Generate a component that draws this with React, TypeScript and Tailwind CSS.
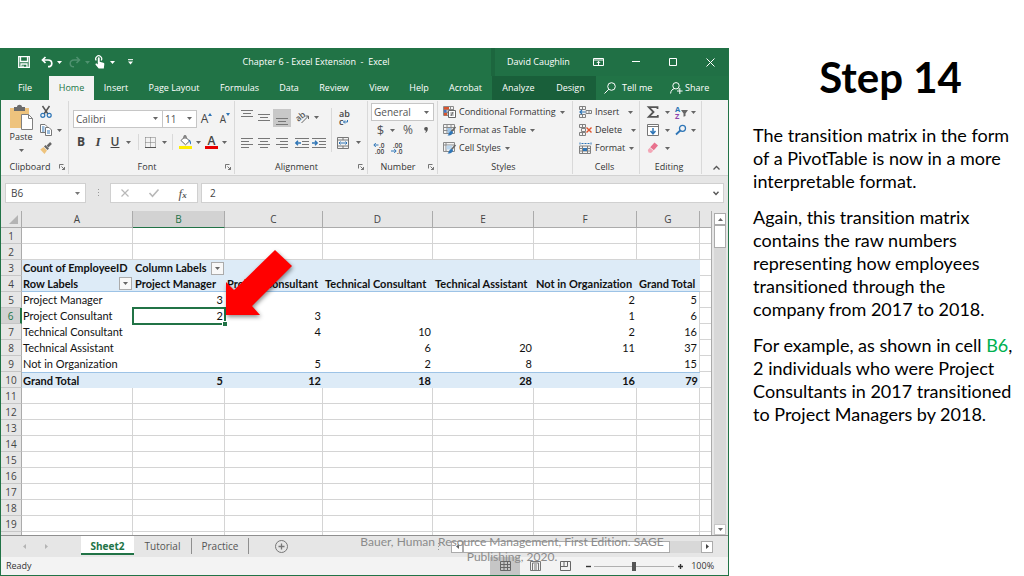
import React from "react";

const UI = "font-['Open_Sans','Noto_Sans',sans-serif]";
const SHEET = "font-[Lato,sans-serif] [font-variant-ligatures:none]";

function Caret({ className = "text-[#666]" }: { className?: string }) {
  return (
    <svg viewBox="0 0 5 3" className={`h-[3px] w-[5px] shrink-0 ${className}`} aria-hidden="true">
      <path d="M0 0h5L2.5 3z" fill="currentColor" />
    </svg>
  );
}

type IconProps = { w?: string; h?: string; box: string; children: React.ReactNode };
function Icon({ w = "w-4", h = "h-4", box, children }: IconProps) {
  return (
    <svg viewBox={box} className={`${w} ${h} shrink-0 overflow-visible`} fill="none" stroke="currentColor" aria-hidden="true">
      {children}
    </svg>
  );
}

function Tool({ label, className = "", children }: { label: string; className?: string; children: React.ReactNode }) {
  return (
    <button type="button" aria-label={label} className={`flex shrink-0 items-center justify-center ${className}`}>
      {children}
    </button>
  );
}

/* ---------- Title bar and tabs ---------- */

function TitleBar() {
  return (
    <header className="flex h-7 shrink-0 items-center bg-[#217346] text-[9px] text-white">
      <div className="flex w-[140px] shrink-0 items-center pl-[15px]">
        <Tool label="Save" className="w-4">
          <Icon w="w-3" h="h-3" box="0 0 12 12">
            <path d="M.7.7h10.6v10.6H.7zM2.5 1v4.5h7V1M3 11V8h6v3M5 11V9.5" strokeWidth="1.3" />
          </Icon>
        </Tool>
        <Tool label="Undo" className="ml-[7px] w-6 gap-1">
          <Icon w="w-3" h="h-3" box="0 0 12 12">
            <path d="M4.500 1 1.500 4l3 3M1.500 4H7c2.500 0 3.800 1.500 3.800 3.400S9.500 10.700 7 10.700" strokeWidth="1.700" />
          </Icon>
          <Caret className="text-white" />
        </Tool>
        <Tool label="Redo" className="ml-1 w-6 gap-1 text-[#4f9270]">
          <Icon w="w-3" h="h-3" box="0 0 12 12">
            <path d="m7.500 1 3 3-3 3M10.500 4H5C2.500 4 1.200 5.500 1.200 7.400S2.500 10.700 5 10.700" strokeWidth="1.500" />
          </Icon>
          <Caret className="text-[#4f9270]" />
        </Tool>
        <Tool label="Touch or mouse mode" className="ml-px w-6 gap-1">
          <Icon w="w-3" h="h-[14px]" box="0 0 12 14">
            <path d="M2.200 5.500a3 3 0 1 1 5 0" strokeWidth="1.200" />
            <path d="M3.800 3.200c0-1.200 1.900-1.200 1.900 0v3.600l3.600.9c.8.2 1.100.7 1 1.500l-.5 4.300H4.700L1.600 9.700c-.5-.9.400-1.700 1.200-1.100l1 .8z" fill="currentColor" stroke="none" />
          </Icon>
          <Caret className="text-white" />
        </Tool>
        <Tool label="Customize toolbar" className="ml-2 w-3">
          <Icon w="w-[5px]" h="h-[6px]" box="0 0 6 7">
            <path d="M0 .7h6" strokeWidth="1.200" />
            <path d="M0 3h6L3 6.500z" fill="currentColor" stroke="none" />
          </Icon>
        </Tool>
      </div>
      <h2 className="flex-1 whitespace-pre text-center font-normal">Chapter 6 - Excel Extension  -  Excel</h2>
      <div className="flex h-full w-[237px] shrink-0 items-center border-l-4 border-[#1c663e] bg-[#207045]">
        <span className="w-[97px] pl-3 whitespace-nowrap">David Caughlin</span>
        <Tool label="Ribbon display options" className="w-3">
          <Icon w="w-[11px]" h="h-2" box="0 0 11 8">
            <path d="M.5.5h10v7H.5zM.5 2h10M5.500 7V3.500M3.800 5 5.500 3.300 7.200 5" />
          </Icon>
        </Tool>
        <Tool label="Minimize" className="ml-[26px] w-3">
          <Icon w="w-2" h="h-2" box="0 0 8 8"><path d="M0 3.500h8" /></Icon>
        </Tool>
        <Tool label="Maximize" className="ml-[25px] w-3">
          <Icon w="w-2" h="h-2" box="0 0 8 8"><path d="M.5.5h7v7h-7z" /></Icon>
        </Tool>
        <Tool label="Close" className="ml-[25px] w-3">
          <Icon w="w-[9px]" h="h-[9px]" box="0 0 9 9"><path d="m.5.5 8 8m0-8-8 8" /></Icon>
        </Tool>
      </div>
    </header>
  );
}

const TABS: { name: string; cls: string }[] = [
  { name: "File", cls: "w-12" },
  { name: "Home", cls: "w-[45px] bg-[#f3f3f3] text-[#217346]" },
  { name: "Insert", cls: "w-11" },
  { name: "Page Layout", cls: "w-[72px]" },
  { name: "Formulas", cls: "w-[59px]" },
  { name: "Data", cls: "w-10" },
  { name: "Review", cls: "w-[50px]" },
  { name: "View", cls: "w-10" },
  { name: "Help", cls: "w-10" },
  { name: "Acrobat", cls: "w-[53px]" },
  { name: "Analyze", cls: "w-[53px] bg-[#195f3a]" },
  { name: "Design", cls: "w-[51px] bg-[#195f3a]" },
];

function RibbonTabs() {
  return (
    <nav className="flex h-6 shrink-0 bg-[#217346] text-[9px] text-white">
      {TABS.map((t) => (
        <button key={t.name} type="button" className={`shrink-0 whitespace-nowrap ${t.cls}`}>
          {t.name}
        </button>
      ))}
      <button type="button" className="flex w-[65px] shrink-0 items-center gap-[6px] pl-2 whitespace-nowrap">
        <Icon w="w-3" h="h-3" box="0 0 12 12">
          <circle cx="7.500" cy="4.500" r="3.800" />
          <path d="M4.800 7.200.5 11.500" />
        </Icon>
        Tell me
      </button>
      <button type="button" className="flex shrink-0 items-center gap-[2px] pl-[9px] whitespace-nowrap">
        <Icon w="w-[13px]" h="h-3" box="0 0 13 12">
          <circle cx="6" cy="3.800" r="3.200" />
          <path d="M.6 11.500C.8 8.500 2.500 7 4.500 6.600M7.500 6.600l1 .6M9.800 6v6M7 9h5.600" />
        </Icon>
        Share
      </button>
    </nav>
  );
}

/* ---------- Ribbon ---------- */

function Launcher({ name }: { name: string }) {
  return (
    <button type="button" aria-label={`${name} settings`} className="shrink-0 text-[#666]">
      <Icon w="w-[6px]" h="h-[6px]" box="0 0 6 6">
        <path d="M.5 4.500v-4h4M2.500 2.500l3 3M5.500 3v2.500H3" strokeWidth=".9" />
      </Icon>
    </button>
  );
}

function Group({ name, width, launcher, children }: { name: string; width: string; launcher?: boolean; children: React.ReactNode }) {
  return (
    <section aria-label={name} className={`flex shrink-0 flex-col ${width}`}>
      <div className="flex flex-1 border-r border-[#d9d9d9]">
        <div className="flex min-w-0 flex-1 flex-col">
          <div className="h-[59px] pt-[2px]">{children}</div>
          <div className="flex h-[14px] items-center pr-[3px] text-[#333]">
            <span className="flex-1 text-center">{name}</span>
            {launcher && <Launcher name={name} />}
          </div>
        </div>
      </div>
    </section>
  );
}

function Divider() {
  return <span className="h-4 w-px shrink-0 bg-[#d9d9d9]" />;
}

function Combo({ label, value, className }: { label: string; value: string; className: string }) {
  return (
    <div className={`flex h-[18px] items-center border border-[#c6c6c6] bg-white pr-1 text-[10px] leading-[14px] ${className}`}>
      <select aria-label={label} className="h-full min-w-0 flex-1 appearance-none bg-transparent pl-[2px] text-[#555] outline-none">
        <option>{value}</option>
      </select>
      <Caret />
    </div>
  );
}

function Lines({ d }: { d: string }) {
  return (
    <Icon w="w-3" h="h-3" box="0 0 12 12">
      <path d={d} stroke="#777" />
    </Icon>
  );
}

function Indent({ out }: { out?: boolean }) {
  return (
    <Icon w="w-[14px]" h="h-3" box="0 0 14 12">
      <path d="M0 1.500h14M7 4.500h7M7 7.500h7M0 10.500h14" stroke="#777" />
      <path d={out ? "M6 6H1M3 3.800.8 6 3 8.200" : "M0 6h5M3 3.800 5.200 6 3 8.200"} stroke="#2e75b6" strokeWidth="1.400" />
    </Icon>
  );
}

function MenuRow({ label, icon, gap = "ml-px" }: { label: string; icon: React.ReactNode; gap?: "ml-px" | "ml-[6px]" }) {
  return (
    <button type="button" className="flex h-[18px] items-center gap-[3px] whitespace-nowrap text-[#333]">
      {icon}
      {label}
      <span className={`flex ${gap}`}>
        <Caret />
      </span>
    </button>
  );
}

const condIcon = (
  <Icon w="w-[13px]" h="h-3" box="0 0 13 12">
    <path d="M.5.5h10v9H.5zM.5 3.500h10M.5 6.500h10M4 .5v9M7.500.5v9" stroke="#8a8a8a" />
    <path d="M1 1h5v2.500H1zM1 7h3v2.500H1z" fill="#d9532c" stroke="none" />
    <path d="M1 4h2.500v2.500H1z" fill="#4472c4" stroke="none" />
    <path d="M5.500 4.500h7v7h-7z" fill="#fff" stroke="#666" />
    <path d="M7.300 7h3.400M7.300 9h3.400M10 6 8 10" stroke="#555" strokeWidth=".8" />
  </Icon>
);
const tableIcon = (
  <Icon w="w-[13px]" h="h-3" box="0 0 13 12">
    <path d="M.5.5h11v9H.5zM.5 3.500h11M.5 6.500h11M4 .5v9M8 .5v9" stroke="#8a8a8a" />
    <path d="M4.500 4H8v5H4.500z" fill="#9dc3e6" stroke="none" />
    <path d="M12.500 3 8.500 7.500" stroke="#666" strokeWidth="1.600" />
    <path d="M8.700 7c1.500.3 1.700 1.800.5 3S6 11.800 4.500 11.500C6 10.500 6 7 8.700 7z" fill="#2e75b6" stroke="none" />
  </Icon>
);
const styleIcon = (
  <Icon w="w-[13px]" h="h-3" box="0 0 13 12">
    <path d="M.5.5h11v9H.5zM.5 3h11M3 .5v9" stroke="#8a8a8a" />
    <path d="M3.500 3.500H9v4H3.500z" fill="#bdd7ee" stroke="none" />
    <path d="M12.500 3 8.500 7.500" stroke="#666" strokeWidth="1.600" />
    <path d="M8.700 7c1.500.3 1.700 1.800.5 3S6 11.800 4.500 11.500C6 10.500 6 7 8.700 7z" fill="#2e75b6" stroke="none" />
  </Icon>
);
const insertIcon = (
  <Icon w="w-[13px]" h="h-3" box="0 0 13 12">
    <path d="M.5.5h6v3h-6zM3.500.5v3M.5 8.500h6v3h-6zM3.500 8.500v3M7 4.500h5.500v3H7zM10 4.500v3" stroke="#808080" />
    <path d="M6.500 6H1M3 4 1 6l2 2" stroke="#2e75b6" strokeWidth="1.200" />
  </Icon>
);
const deleteIcon = (
  <Icon w="w-[13px]" h="h-3" box="0 0 13 12">
    <path d="M.5.5h6v3h-6zM3.500.5v3M.5 8.500h6v3h-6zM3.500 8.500v3M2.500 4.500h4v3h-4z" stroke="#808080" />
    <path d="m7.500 3.500 5 5m0-5-5 5" stroke="#e0532c" strokeWidth="1.400" />
  </Icon>
);
const formatIcon = (
  <Icon w="w-[13px]" h="h-3" box="0 0 13 12">
    <path d="M1 .5v2M12 .5v2M2.500 1.500h8" stroke="#2e75b6" strokeDasharray="2 1" />
    <path d="M.5 4h11v7.500H.5zM.5 6.500h11M.5 9h11M3.500 4v7.500M8.500 4v7.500" stroke="#808080" />
    <path d="M4 6h4v3H4z" fill="#2e75b6" stroke="none" />
  </Icon>
);

function Ribbon() {
  return (
    <div className="flex h-[76px] shrink-0 border-b border-[#d2d2d2] bg-[#f3f3f3] pt-px pb-px text-[9px] leading-[12px]">
      <Group name="Clipboard" width="w-[68px]" launcher>
        <div className="flex pl-2">
          <button type="button" className="flex w-6 flex-col items-center gap-px pt-px text-[#333]">
            <Icon w="w-6" h="h-[26px]" box="0 0 24 26">
              <path d="M1 4h19v20H1z" fill="#eec37d" stroke="none" />
              <path d="M5 3h3c0-3 5-3 5 0h3v4H5z" fill="#6b6b6b" stroke="none" />
              <path d="M12.500 10.500h7l4 4v11h-11z" fill="#fff" stroke="#808080" />
              <path d="M19.500 10.500v4h4" stroke="#808080" />
            </Icon>
            Paste
            <span className="pt-[5px]"><Caret /></span>
          </button>
          <div className="ml-[7px] flex flex-col">
            <Tool label="Cut" className="h-[18px] w-3">
              <Icon w="w-3" h="h-3" box="0 0 12 12">
                <path d="m2.500 0 5.500 8M9.500 0 4 8" stroke="#555" strokeWidth="1.500" />
                <circle cx="2.800" cy="9.300" r="2" stroke="#2e75b6" strokeWidth="1.200" />
                <circle cx="9.200" cy="9.300" r="2" stroke="#2e75b6" strokeWidth="1.200" />
              </Icon>
            </Tool>
            <Tool label="Copy" className="h-[18px] gap-[5px]">
              <Icon w="w-3" h="h-3" box="0 0 12 12">
                <path d="M.5.5H5l2 2v6H.5z" fill="#fff" stroke="#777" />
                <path d="M2 3h2.500M2 5h2.500M2 7h2.500" stroke="#2e75b6" />
                <path d="M5.500 3.500H9l2.500 2.500v5.500h-6z" fill="#fff" stroke="#777" />
                <path d="M7 7h3M7 9h3" stroke="#2e75b6" />
              </Icon>
              <Caret />
            </Tool>
            <Tool label="Format painter" className="h-[18px] w-3">
              <Icon w="w-3" h="h-3" box="0 0 12 12">
                <path d="m11 1-3.500 3.500" stroke="#666" strokeWidth="2.500" />
                <path d="M5.500 3 9 6.500 7.500 8 4 4.500z" fill="#666" stroke="none" />
                <path d="M3.500 5 7 8.500 4.500 12 .3 7.500z" fill="#eec37d" stroke="none" />
              </Icon>
            </Tool>
          </div>
        </div>
      </Group>

      <Group name="Font" width="w-[166px]" launcher>
        <div className="flex h-[27px] items-center pt-[4px] pl-1">
          <Combo label="Font" value="Calibri" className="w-[90px]" />
          <Combo label="Font size" value="11" className="w-[34px] border-l-0" />
          <Tool label="Increase font size" className="ml-[4px] h-[18px] w-[11px] text-[12px] text-[#444]">
            A<svg viewBox="0 0 4 3" className="mb-[9px] h-[3px] w-1 shrink-0"><path d="M0 3h4L2 0z" fill="#2e75b6" /></svg>
          </Tool>
          <Tool label="Decrease font size" className="ml-2 h-[18px] w-[10px] text-[10px] text-[#444]">
            A<svg viewBox="0 0 4 3" className="mb-[9px] h-[3px] w-1 shrink-0"><path d="M0 0h4L2 3z" fill="#2e75b6" /></svg>
          </Tool>
        </div>
        <div className="flex h-[24px] items-center pl-1 text-[12px] text-[#444]">
          <Tool label="Bold" className="w-4"><b>B</b></Tool>
          <Tool label="Italic" className="w-[18px]"><i className="font-['Liberation_Serif',serif] text-[13px] font-bold">I</i></Tool>
          <Tool label="Underline" className="ml-px w-[26px] gap-[7px]"><span className="font-semibold underline">U</span><Caret /></Tool>
          <span className="w-[4px]" /><Divider />
          <Tool label="Borders" className="ml-[5px] w-6 gap-[6px]">
            <Icon w="w-[11px]" h="h-[11px]" box="0 0 11 11">
              <path d="M.5.5h10v9.500M.5.5V10M5.500.5V10M.5 5.500h10" stroke="#777" strokeDasharray="1 1" />
              <path d="M0 10.500h11" stroke="#555" />
            </Icon>
            <Caret />
          </Tool>
          <span className="w-[4px]" /><Divider />
          <Tool label="Fill color" className="ml-[5px] w-6 gap-1">
            <Icon w="w-[13px]" h="h-[14px]" box="0 0 13 14">
              <path d="M6 1.500 10.500 6 6.500 9.800 2 5.500zM5 4V.8h2V4" stroke="#666" fill="#fff" />
              <path d="M9.500 4.500c2 .5 2.800 2 2.500 5-1.200-.5-1-2.500-2-3.500z" fill="#2e75b6" stroke="none" />
              <path d="M0 11h13v3H0z" fill="#ffee00" stroke="none" />
            </Icon>
            <Caret />
          </Tool>
          <Tool label="Font color" className="ml-[2px] w-6 gap-[4px]">
            <span className="flex w-[13px] flex-col items-center border-b-[3px] border-[#e80000] text-[12px] leading-[11px] font-semibold">A</span>
            <Caret />
          </Tool>
        </div>
      </Group>

      <Group name="Alignment" width="w-[133px]" launcher>
        <div className="flex h-[54px] items-center">
          <div className="flex flex-1 flex-col gap-[7px] pl-[3px]">
            <div className="flex h-[18px] items-center">
              <Tool label="Top align" className="h-[18px] w-[17px] items-start"><Lines d="M0 1.500h12M2 4.500h8M0 7.500h12" /></Tool>
              <Tool label="Middle align" className="w-[18px]"><Lines d="M0 2.500h12M2 5.500h8M0 8.500h12" /></Tool>
              <Tool label="Bottom align" className="h-[18px] w-[18px] items-end bg-[#c8c8c8] pb-px"><Lines d="M0 4.500h12M2 7.500h8M0 10.500h12" /></Tool>
              <Tool label="Orientation" className="ml-1 w-6 gap-1">
                <Icon w="w-[14px]" h="h-[13px]" box="0 0 14 13">
                  <text x="0" y="9" fontSize="8.500" fontWeight="600" fill="#555" stroke="none" transform="rotate(-40 4 7)">ab</text>
                  <path d="m5.500 12 7-7M9.500 5h3v3" stroke="#666" />
                </Icon>
                <Caret />
              </Tool>
            </div>
            <div className="flex h-[18px] items-center">
              <Tool label="Align left" className="w-[17px]"><Lines d="M0 1.500h12M0 4.500h8M0 7.500h12M0 10.500h8" /></Tool>
              <Tool label="Center" className="w-[18px]"><Lines d="M0 1.500h12M2 4.500h8M0 7.500h12M2 10.500h8" /></Tool>
              <Tool label="Align right" className="w-[18px]"><Lines d="M0 1.500h12M4 4.500h8M0 7.500h12M4 10.500h8" /></Tool>
              <Tool label="Decrease indent" className="ml-[2px] w-[17px]"><Indent out /></Tool>
              <Tool label="Increase indent" className="w-[18px]"><Indent /></Tool>
            </div>
          </div>
          <span className="h-11 w-px bg-[#d9d9d9]" />
          <div className="flex w-[35px] flex-col gap-[7px] pl-[5px]">
            <Tool label="Wrap text" className="h-[18px] w-4 flex-col items-start pl-[2px] text-[9px] font-semibold text-[#444]">
              <span className="leading-[8px]">ab</span>
              <span className="flex h-[7px] items-center leading-[7px]">
                c
                <Icon w="w-[5px]" h="h-[4px]" box="0 0 5 4">
                  <path d="M4.500 0v2H.5M2 .5.5 2 2 3.500" stroke="#2e75b6" />
                </Icon>
              </span>
            </Tool>
            <Tool label="Merge and center" className="h-[18px] w-6 gap-[7px]">
              <Icon w="w-3" h="h-3" box="0 0 12 12">
                <path d="M.5.5h11v11H.5zM.5 3h11M.5 9h11M6 .5V3M6 9v2.500" stroke="#777" />
                <path d="M2 6h8M3.500 4.500 2 6l1.500 1.500M8.500 4.500 10 6 8.500 7.500" stroke="#2e75b6" />
              </Icon>
              <Caret />
            </Tool>
          </div>
        </div>
      </Group>

      <Group name="Number" width="w-[70px]" launcher>
        <div className="px-[3px]">
          <Combo label="Number format" value="General" className="w-[63px]" />
          <div className="flex h-[18px] items-center pl-[4px] text-[12px] text-[#555]">
            <Tool label="Currency" className="w-[22px] gap-[6px] text-[13px]">$<Caret /></Tool>
            <Tool label="Percent" className="ml-[5px] w-3">%</Tool>
            <Tool label="Comma style" className="ml-2 w-2">
              <svg viewBox="0 0 4 6" className="h-[6px] w-1"><path d="M2 0a1.700 1.700 0 0 1 1.800 2C3.800 4 2.500 5.500 1 6c.6-.9 1-1.500 1-2.300A1.800 1.800 0 0 1 2 0z" fill="#555" /></svg>
            </Tool>
          </div>
          <div className="flex h-[18px] items-center gap-[6px] pl-[2px]">
            <Tool label="Increase decimal">
              <Icon w="w-3" h="h-3" box="0 0 12 12">
                <path d="M5.500 3H1M2.800 1 .8 3l2 2" stroke="#2e75b6" />
                <text x="6" y="5.500" fontSize="6.500" fontWeight="600" fill="#444" stroke="none">.0</text>
                <text x="2" y="12" fontSize="6.500" fontWeight="600" fill="#444" stroke="none">.00</text>
              </Icon>
            </Tool>
            <Tool label="Decrease decimal">
              <Icon w="w-3" h="h-3" box="0 0 12 12">
                <text x="2" y="5.500" fontSize="6.500" fontWeight="600" fill="#444" stroke="none">.00</text>
                <text x="6" y="12" fontSize="6.500" fontWeight="600" fill="#444" stroke="none">.0</text>
                <path d="M0 9h5M3.200 7l2 2-2 2" stroke="#2e75b6" />
              </Icon>
            </Tool>
          </div>
        </div>
      </Group>

      <Group name="Styles" width="w-[135px]">
        <div className="flex flex-col items-start pl-[5px]">
          <MenuRow label="Conditional Formatting" icon={condIcon} />
          <MenuRow label="Format as Table" icon={tableIcon} />
          <MenuRow label="Cell Styles" icon={styleIcon} />
        </div>
      </Group>

      <Group name="Cells" width="w-[67px]">
        <div className="flex flex-col items-start pl-[6px]">
          <MenuRow label="Insert" icon={insertIcon} gap="ml-[6px]" />
          <MenuRow label="Delete" icon={deleteIcon} gap="ml-[6px]" />
          <MenuRow label="Format" icon={formatIcon} />
        </div>
      </Group>

      <Group name="Editing" width="w-[62px]">
        <div className="grid grid-cols-[28px_26px] pl-[7px]">
          <Tool label="AutoSum" className="h-[18px] justify-start gap-[6px]">
            <Icon w="w-3" h="h-3" box="0 0 12 12">
              <path d="M10.500 3V1.200H1.800L6.500 6l-4.700 4.800h9V9" stroke="#555" strokeWidth="1.800" />
            </Icon>
            <Caret />
          </Tool>
          <Tool label="Sort and filter" className="h-[18px] justify-start gap-[3px]">
            <Icon w="w-[13px]" h="h-[13px]" box="0 0 13 13">
              <text x="0" y="6" fontSize="7.500" fontWeight="700" fill="#2e75b6" stroke="none">A</text>
              <text x="0" y="13" fontSize="7.500" fontWeight="700" fill="#8e44ad" stroke="none">Z</text>
              <path d="M6 4h7l-2.500 3.500V10l-2 .8V7.500z" fill="#666" stroke="none" />
            </Icon>
            <Caret />
          </Tool>
          <Tool label="Fill" className="h-[18px] justify-start gap-[6px]">
            <Icon w="w-3" h="h-3" box="0 0 12 12">
              <path d="M.5.500h11v11H.5zM.5 2.500h11" stroke="#777" fill="#fff" />
              <path d="M6 4v5.500M3.500 7 6 9.800 8.500 7" stroke="#2e75b6" strokeWidth="1.500" />
            </Icon>
            <Caret />
          </Tool>
          <Tool label="Find and select" className="h-[18px] justify-start gap-[4px]">
            <Icon w="w-3" h="h-3" box="0 0 12 12">
              <circle cx="7.500" cy="4.300" r="3" stroke="#2e75b6" strokeWidth="1.300" />
              <path d="M5.300 6.500 1 10.500" stroke="#2e75b6" strokeWidth="1.800" />
            </Icon>
            <Caret />
          </Tool>
          <Tool label="Clear" className="h-[18px] justify-start gap-[6px]">
            <Icon w="w-3" h="h-3" box="0 0 12 12">
              <path d="m7.500.5 3.500 3-4.200 4.700-3.600-3z" fill="#e8718d" stroke="none" />
              <path d="M2.700 5.700 6.300 8.700 4 11 1.500 10.500 .8 8z" fill="#f3a6b6" stroke="none" />
            </Icon>
            <Caret />
          </Tool>
        </div>
      </Group>

      <div className="flex flex-1 items-end pb-1 pl-[11px] text-[#555]">
        <Tool label="Collapse ribbon">
          <Icon w="w-[7px]" h="h-1" box="0 0 7 4"><path d="M.5 3.500l3-3 3 3" strokeWidth="1.300" /></Icon>
        </Tool>
      </div>
    </div>
  );
}

/* ---------- Formula bar ---------- */

function FormulaBar() {
  return (
    <div className="flex h-[35px] shrink-0 items-center bg-[#e6e6e6] pr-1 pb-px pl-1 text-[10px] text-[#444]">
      <div className="flex h-5 w-[81px] shrink-0 items-center border border-[#d0d0d0] bg-white pr-[5px]">
        <input aria-label="Name box" defaultValue="B6" className="h-full min-w-0 flex-1 pl-[5px] outline-none" />
        <Caret className="text-[#777]" />
      </div>
      <Icon w="w-6" h="h-2" box="0 0 24 8">
        <path d="M12.500 0v8" stroke="#999" strokeDasharray="1 2" />
      </Icon>
      <div className="flex h-5 w-[88px] shrink-0 items-center justify-around border border-[#d0d0d0] bg-white">
        <Tool label="Cancel" className="w-4 text-[#b8b8b8]">
          <Icon w="w-2" h="h-2" box="0 0 8 8"><path d="m.5.500 7 7m0-7-7 7" strokeWidth="1.200" /></Icon>
        </Tool>
        <Tool label="Enter" className="w-4 text-[#b8b8b8]">
          <Icon w="w-[10px]" h="h-2" box="0 0 10 8"><path d="m.5 4 3 3.200L9.500.5" strokeWidth="1.600" /></Icon>
        </Tool>
        <Tool label="Insert function" className="w-4 text-[#555]">
          <i className="font-['Liberation_Serif',serif] text-[13px] leading-none">f<span className="text-[9px] font-bold">x</span></i>
        </Tool>
      </div>
      <div className="ml-[3px] flex h-5 flex-1 items-center border border-[#d0d0d0] bg-white pr-1">
        <input aria-label="Formula" defaultValue="2" className="h-full min-w-0 flex-1 pl-2 outline-none" />
        <Icon w="w-[6px]" h="h-[5px]" box="0 0 6 5"><path d="M.5.800 3 3.500 5.500.8" stroke="#555" strokeWidth="1.400" /></Icon>
      </div>
    </div>
  );
}

/* ---------- Sheet ---------- */

const COLS = ["A", "B", "C", "D", "E", "F", "G"];
const DATA: Record<number, string[]> = {
  3: ["Count of EmployeeID", "Column Labels", "", "", "", "", ""],
  4: ["Row Labels", "Project Manager", "Project Consultant", "Technical Consultant", "Technical Assistant", "Not in Organization", "Grand Total"],
  5: ["Project Manager", "3", "", "", "", "2", "5"],
  6: ["Project Consultant", "2", "3", "", "", "1", "6"],
  7: ["Technical Consultant", "", "4", "10", "", "2", "16"],
  8: ["Technical Assistant", "", "", "6", "20", "11", "37"],
  9: ["Not in Organization", "", "5", "2", "8", "", "15"],
  10: ["Grand Total", "5", "12", "18", "28", "16", "79"],
};
const ROWS = Array.from({ length: 19 }, (_, i) => i + 1);

function cellClass(row: number, col: number) {
  const last = col === COLS.length - 1;
  if (row < 3 || row > 10) return "border-r border-b border-[#d4d4d4]";
  if (row === 3) return "bg-[#ddebf7] font-bold";
  if (row === 4) return "bg-[#ddebf7] font-bold border-b border-[#9dc3e6]";
  if (row === 10) return "bg-[#ddebf7] font-bold border-t border-[#9dc3e6]";
  return last ? "border-r border-[#d4d4d4]" : "";
}

function FilterButton({ label }: { label: string }) {
  return (
    <button type="button" aria-label={label} className="flex h-[13px] w-[13px] shrink-0 items-center justify-center border border-[#ababab] bg-[#f8f8f8]">
      <Caret />
    </button>
  );
}

function Sheet() {
  return (
    <div className="relative min-w-0 flex-1 overflow-hidden border-r border-[#ababab] bg-white">
      <table className="w-full table-fixed border-separate border-spacing-0 text-[11px] leading-[14px]">
        <colgroup>
          <col className="w-[21px]" />
          <col className="w-[111px]" />
          <col className="w-[92px]" />
          <col className="w-[98px]" />
          <col className="w-[110px]" />
          <col className="w-[101px]" />
          <col className="w-[103px]" />
          <col className="w-[63px]" />
          <col />
        </colgroup>
        <thead className={UI}>
          <tr className="h-[17px] bg-[#e6e6e6] text-[10px] text-[#444]">
            <th className="border-r border-b border-[#ababab] p-0">
              <svg viewBox="0 0 9 9" className="ml-auto mr-[3px] h-[9px] w-[9px]" aria-hidden="true"><path d="M9 0v9H0z" fill="#b4b4b4" /></svg>
            </th>
            {COLS.map((c) => (
              <th
                key={c}
                className={`border-r border-b p-0 font-normal ${c === "B" ? "border-r-[#ababab] border-b-[#217346] bg-[#d2d2d2] text-[#217346]" : "border-[#ababab]"}`}
              >
                {c}
              </th>
            ))}
            <th className="border-b border-[#ababab] p-0" />
          </tr>
        </thead>
        <tbody className={SHEET}>
          {ROWS.map((r) => (
            <tr key={r} className="h-4">
              <th
                className={`border-b p-0 text-[10px] font-normal ${UI} ${r === 6 ? "border-r-2 border-r-[#217346] border-b-[#c6c6c6] bg-[#d2d2d2] text-[#217346]" : "border-r border-r-[#ababab] border-b-[#c6c6c6] bg-[#e6e6e6] text-[#444]"}`}
              >
                {r}
              </th>
              {COLS.map((c, i) => {
                const v = DATA[r]?.[i] ?? "";
                const numeric = /^\d/.test(v);
                const selected = r === 6 && c === "B";
                const filter = (r === 3 && i === 1) || (r === 4 && i === 0);
                return (
                  <td
                    key={c}
                    className={`h-4 p-0 whitespace-nowrap text-[#111] ${cellClass(r, i)} ${numeric ? "pr-[2px] text-right" : i === 0 ? "pl-px" : "pl-[2px]"} ${selected ? "relative outline-2 -outline-offset-1 outline-[#217346]" : ""}`}
                  >
                    {filter ? (
                      <div className="flex h-[14px] items-center justify-between pr-[1px]">
                        {v}
                        <FilterButton label={`Filter ${v}`} />
                      </div>
                    ) : (
                      v
                    )}
                    {selected && <span className="absolute -right-[2px] -bottom-[2px] h-[5px] w-[5px] border-t border-l border-white bg-[#217346]" />}
                  </td>
                );
              })}
              <td className="border-b border-[#d4d4d4] p-0" />
            </tr>
          ))}
          <tr className="h-[3px]">
            <th className="border-r border-[#ababab] bg-[#e6e6e6] p-0" />
            {COLS.map((c) => (
              <td key={c} className="border-r border-[#d4d4d4] p-0" />
            ))}
            <td className="p-0" />
          </tr>
        </tbody>
      </table>
      <svg viewBox="0 0 72 74" className="absolute top-[37px] left-[223px] h-[74px] w-[72px] drop-shadow-[1px_2px_2px_rgba(0,0,0,0.45)]" aria-hidden="true">
        <path d="M51 2 68 18 28 58 36 67H2V34l8 8z" fill="#ff0000" />
      </svg>
    </div>
  );
}

function VerticalScroll() {
  return (
    <div className="flex w-4 shrink-0 flex-col items-center bg-[#e6e6e6] pt-[2px]">
      <button type="button" aria-label="Scroll up" className="flex h-3 w-3 shrink-0 items-center justify-center border border-[#ababab] bg-white">
        <Caret className="rotate-180 text-[#666]" />
      </button>
      <div className="w-3 flex-1 bg-[#d8d8d8]">
        <div className="h-[23px] border border-[#ababab] bg-white" />
      </div>
      <button type="button" aria-label="Scroll down" className="flex h-[11px] w-3 shrink-0 items-center justify-center border border-[#c6c6c6] bg-white">
        <Caret />
      </button>
    </div>
  );
}

function SheetTabs() {
  return (
    <div className="flex h-[22px] shrink-0 border-t border-[#8f8f8f] bg-[#e6e6e6] text-[10px] text-[#555]">
      <div className="flex w-20 shrink-0 items-center gap-[18px] pl-[21px] text-[#b4b4b4]">
        <Tool label="Previous sheet" className="w-1"><svg viewBox="0 0 3 5" className="h-[5px] w-[3px]"><path d="M3 0v5L0 2.500z" fill="currentColor" /></svg></Tool>
        <Tool label="Next sheet" className="w-1"><svg viewBox="0 0 3 5" className="h-[5px] w-[3px]"><path d="M0 0v5l3-2.500z" fill="currentColor" /></svg></Tool>
      </div>
      <button type="button" className="h-[19px] w-[53px] shrink-0 border-b-2 border-[#217346] bg-white pt-[3px] text-[10px] leading-[14px] font-bold text-[#217346]">Sheet2</button>
      <div className="flex h-5 shrink-0 items-center">
        <button type="button" className="h-4 w-[58px] border-r border-[#8f8f8f]">Tutorial</button>
        <button type="button" className="h-4 w-[57px] border-r border-[#8f8f8f]">Practice</button>
        <Tool label="New sheet" className="ml-[26px] text-[#777]">
          <Icon w="w-[13px]" h="h-[13px]" box="0 0 13 13">
            <circle cx="6.500" cy="6.500" r="6" />
            <path d="M6.500 3.500v6M3.500 6.500h6" strokeWidth="1.300" />
          </Icon>
        </Tool>
      </div>
      <div className="flex flex-1 items-center justify-end pr-[15px]">
        <Icon w="w-4" h="h-2" box="0 0 16 8"><path d="M3.500 0v8" stroke="#999" strokeDasharray="1 2" /></Icon>
        <div className="flex h-3 w-[262px] bg-[#d8d8d8]">
          <button type="button" aria-label="Scroll left" className="flex w-3 items-center justify-center border border-[#ababab] bg-white">
            <svg viewBox="0 0 3 5" className="h-[5px] w-[3px]"><path d="M3 0v5L0 2.500z" fill="#666" /></svg>
          </button>
          <div className="w-[207px] border border-[#ababab] bg-white" />
          <button type="button" aria-label="Scroll right" className="ml-auto flex w-3 items-center justify-center border border-[#ababab] bg-white">
            <svg viewBox="0 0 3 5" className="h-[5px] w-[3px]"><path d="M0 0v5l3-2.500z" fill="#444" /></svg>
          </button>
        </div>
      </div>
    </div>
  );
}

function StatusBar() {
  return (
    <footer className="flex h-[18px] shrink-0 items-center bg-[#f3f3f3] pr-[14px] text-[9px] text-[#333]">
      <span className="flex-1 pl-[5px]">Ready</span>
      <Tool label="Normal view" className="h-full w-[30px] bg-[#c6c6c6]">
        <Icon w="w-[11px]" h="h-[10px]" box="0 0 11 10"><path d="M.5.500h10v9H.5zM.5 3.500h10M.5 6.500h10M4 .5v9M7.500.5v9" stroke="#666" /></Icon>
      </Tool>
      <Tool label="Page layout view" className="w-[30px]">
        <Icon w="w-[11px]" h="h-[10px]" box="0 0 11 10"><path d="M.5.500h10v9H.5zM2.500 2h6v7.500M2.500 2v7.500M4 4h3M4 6h3M4 8h3" stroke="#777" /></Icon>
      </Tool>
      <Tool label="Page break view" className="w-[30px]">
        <Icon w="w-[11px]" h="h-[10px]" box="0 0 11 10"><path d="M.5.500h10v9H.5zM.5 5.500h7v-5M4 .5v5" stroke="#666" /></Icon>
      </Tool>
      <Tool label="Zoom out" className="ml-[5px] w-[6px]">
        <Icon w="w-[5px]" h="h-[5px]" box="0 0 5 5"><path d="M0 2.500h5" strokeWidth="1.400" /></Icon>
      </Tool>
      <input
        type="range"
        aria-label="Zoom"
        min={0}
        max={100}
        defaultValue={50}
        className="mx-[3px] h-[10px] w-[80px] appearance-none bg-[linear-gradient(#b0b0b0,#b0b0b0)] bg-[length:100%_1px] bg-center bg-no-repeat [&::-webkit-slider-thumb]:h-[9px] [&::-webkit-slider-thumb]:w-1 [&::-webkit-slider-thumb]:appearance-none [&::-webkit-slider-thumb]:bg-[#555]"
      />
      <Tool label="Zoom in" className="w-[6px]">
        <Icon w="w-[5px]" h="h-[5px]" box="0 0 5 5"><path d="M0 2.500h5M2.500 0v5" strokeWidth="1.400" /></Icon>
      </Tool>
      <span className="w-[31px] text-right">100%</span>
    </footer>
  );
}

export default function App() {
  return (
    <main className="relative flex h-screen overflow-hidden bg-white">
      <div className="w-[71.2%] shrink-0 pt-12">
        <div className={`flex h-full flex-col border border-t-0 border-[#217346] ${UI}`}>
          <TitleBar />
          <RibbonTabs />
          <Ribbon />
          <FormulaBar />
          <div className="flex min-h-0 flex-1 bg-[#e6e6e6]">
            <Sheet />
            <VerticalScroll />
          </div>
          <SheetTabs />
          <StatusBar />
        </div>
      </div>
      <article className={`min-w-0 flex-1 pt-12 text-black ${SHEET}`}>
        <h1 className="pl-7 text-center text-[42px] leading-[58px] font-bold">Step 14</h1>
        <div className="flex flex-col gap-[13px] pt-[18px] pr-2 pl-6 text-[18px] leading-[23px]">
          <p>The transition matrix in the form of a PivotTable is now in a more interpretable format.</p>
          <p>Again, this transition matrix contains the raw numbers representing how employees transitioned through the company from 2017 to 2018.</p>
          <p>
            For example, as shown in cell <span className="text-[#00b050]">B6</span>, 2 individuals who were Project
            Consultants in 2017 transitioned to Project Managers by 2018.
          </p>
        </div>
      </article>
      <p className={`pointer-events-none absolute inset-x-0 bottom-3 mx-auto w-[320px] text-center text-[12px] leading-[15px] text-[#8b8b8b] ${SHEET}`}>
        Bauer, Human Resource Management, First Edition. SAGE Publishing, 2020.
      </p>
    </main>
  );
}
